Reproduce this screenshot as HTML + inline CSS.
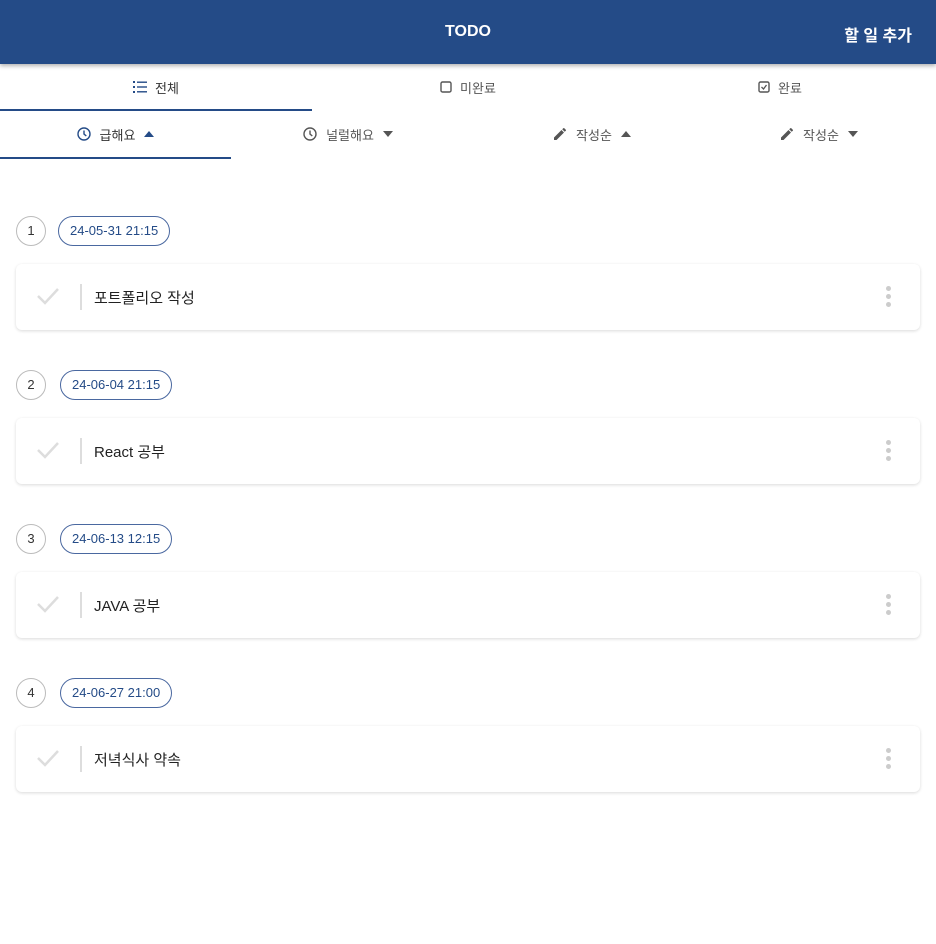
<!DOCTYPE html>
<html><head><meta charset="utf-8"><style>
body{margin:0;width:936px;height:944px;background:#fff;font-family:"Liberation Sans","Noto Sans CJK KR",sans-serif;position:relative;overflow:hidden}
.hdr{position:absolute;left:0;top:0;width:936px;height:64px;background:#244b87;box-shadow:0 2px 4px rgba(0,0,0,.3);color:#fff;font-weight:bold}
.hdr .t{position:absolute;left:0;right:0;top:23px;text-align:center;font-size:16px}
.hdr .a{position:absolute;right:24px;top:22px;font-size:16px}
.tab{position:absolute;display:flex;align-items:center;justify-content:center;gap:8px;font-size:13px;color:#555}
.ul{position:absolute;height:2px;background:#244b87}
.num{position:absolute;left:16px;width:28px;height:28px;border:1px solid #bbb;border-radius:50%;text-align:center;line-height:28px;font-size:13px;color:#333}
.pill{position:absolute;left:58px;height:28px;border:1px solid #4a68a0;border-radius:15px;line-height:28px;padding:0 11px;font-size:13px;color:#244b87}
.card{position:absolute;left:16px;width:904px;height:66px;border-radius:6px;box-shadow:0 1px 3px rgba(0,0,0,.15);background:#fff}
.card .chk{position:absolute;left:20px;top:22px}
.card .dv{position:absolute;left:64px;top:20px;width:2px;height:26px;background:#ddd}
.card .tx{position:absolute;left:78px;top:23px;font-size:15px;color:#222}
.card .dots{position:absolute;right:29px;top:22px;width:5px}
.card .dots i{display:block;width:5px;height:5px;border-radius:50%;background:#ccc;margin-bottom:3px}
</style></head><body>
<div class="hdr"><div class="t">TODO</div><div class="a">할 일 추가</div></div>

<div class="tab" style="left:0;top:64px;width:312px;height:46px;color:#333"><svg width="14" height="12" viewBox="0 0 14 12"><g fill="#244b87"><rect x="0" y="0" width="2" height="2"/><rect x="0" y="5" width="2" height="2"/><rect x="0" y="10" width="2" height="2"/><rect x="4" y="0.5" width="10" height="1.4"/><rect x="4" y="5.3" width="10" height="1.4"/><rect x="4" y="10.1" width="10" height="1.4"/></g></svg>전체</div>
<div class="ul" style="left:0;top:109px;width:312px"></div>
<div class="tab" style="left:312px;top:64px;width:312px;height:46px"><svg width="12" height="12"><rect x="1" y="1" width="10" height="10" rx="1.5" fill="none" stroke="#555" stroke-width="1.4"/></svg>미완료</div>
<div class="tab" style="left:624px;top:64px;width:312px;height:46px"><svg width="12" height="12"><rect x="1" y="1" width="10" height="10" rx="1.5" fill="none" stroke="#555" stroke-width="1.4"/><path d="M3.5 6l2 2 3-4" fill="none" stroke="#555" stroke-width="1.3"/></svg>완료</div>

<div class="tab" style="left:0;top:110px;width:231px;height:48px;color:#333;gap:9px"><svg width="14" height="14"><circle cx="7" cy="7" r="6" fill="none" stroke="#244b87" stroke-width="1.4"/><path d="M7 3.5V7l2.3 2" fill="none" stroke="#244b87" stroke-width="1.4"/></svg>급해요<svg width="10" height="6"><path d="M0 6L5 0l5 6z" fill="#244b87"/></svg></div>
<div class="ul" style="left:0;top:157px;width:231px"></div>
<div class="tab" style="left:231px;top:110px;width:234px;height:48px;gap:9px"><svg width="14" height="14"><circle cx="7" cy="7" r="6" fill="none" stroke="#555" stroke-width="1.4"/><path d="M7 3.5V7l2.3 2" fill="none" stroke="#555" stroke-width="1.4"/></svg>널럴해요<svg width="10" height="6"><path d="M0 0l5 6 5-6z" fill="#555"/></svg></div>
<div class="tab" style="left:465px;top:110px;width:254px;height:48px;gap:9px"><svg width="14" height="14" viewBox="0 0 14 14"><path d="M1 10.5V13h2.5L11 5.5 8.5 3zM12.8 3.7a.7.7 0 000-1L11.3 1.2a.7.7 0 00-1 0L9.2 2.3l2.5 2.5z" fill="#555"/></svg>작성순<svg width="10" height="6"><path d="M0 6L5 0l5 6z" fill="#555"/></svg></div>
<div class="tab" style="left:699px;top:110px;width:240px;height:48px;gap:9px"><svg width="14" height="14" viewBox="0 0 14 14"><path d="M1 10.5V13h2.5L11 5.5 8.5 3zM12.8 3.7a.7.7 0 000-1L11.3 1.2a.7.7 0 00-1 0L9.2 2.3l2.5 2.5z" fill="#555"/></svg>작성순<svg width="10" height="6"><path d="M0 0l5 6 5-6z" fill="#555"/></svg></div>

<div class="num" style="top:216px">1</div><div class="pill" style="top:216px">24-05-31 21:15</div>
<div class="card" style="top:264px"><svg class="chk" width="24" height="20"><path d="M2 10l7 7L22 3" fill="none" stroke="#ddd" stroke-width="2.5"/></svg><div class="dv"></div><div class="tx">포트폴리오 작성</div><div class="dots"><i></i><i></i><i></i></div></div>

<div class="num" style="top:370px">2</div><div class="pill" style="top:370px;left:60px">24-06-04 21:15</div>
<div class="card" style="top:418px"><svg class="chk" width="24" height="20"><path d="M2 10l7 7L22 3" fill="none" stroke="#ddd" stroke-width="2.5"/></svg><div class="dv"></div><div class="tx">React 공부</div><div class="dots"><i></i><i></i><i></i></div></div>

<div class="num" style="top:524px">3</div><div class="pill" style="top:524px;left:60px">24-06-13 12:15</div>
<div class="card" style="top:572px"><svg class="chk" width="24" height="20"><path d="M2 10l7 7L22 3" fill="none" stroke="#ddd" stroke-width="2.5"/></svg><div class="dv"></div><div class="tx">JAVA 공부</div><div class="dots"><i></i><i></i><i></i></div></div>

<div class="num" style="top:678px">4</div><div class="pill" style="top:678px;left:60px">24-06-27 21:00</div>
<div class="card" style="top:726px"><svg class="chk" width="24" height="20"><path d="M2 10l7 7L22 3" fill="none" stroke="#ddd" stroke-width="2.5"/></svg><div class="dv"></div><div class="tx">저녁식사 약속</div><div class="dots"><i></i><i></i><i></i></div></div>
</body></html>
